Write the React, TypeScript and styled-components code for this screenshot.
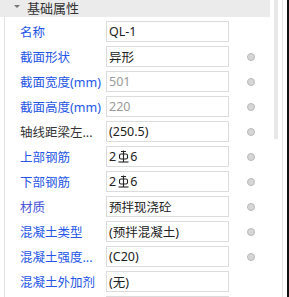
import React from "react";
import styled, { createGlobalStyle } from "styled-components";

const Global = createGlobalStyle`
  html, body { margin: 0; padding: 0; background: #fff; overflow: hidden; }
  * { box-sizing: border-box; }
`;

const Panel = styled.div`
  width: 289px;
  height: 297px;
  display: flex;
  overflow: hidden;
  font-family: "Noto Sans", "Noto Sans CJK SC", sans-serif;
  background: #fff;
`;

const Main = styled.div`
  width: 270px;
  display: flex;
  flex-direction: column;
`;

const Header = styled.div`
  height: 17px;
  background: #ebebeb;
  display: flex;
  align-items: center;
  padding-left: 14px;
  color: #333;
  font-size: 13px;
  line-height: 17px;
`;

const Caret = styled.span`
  width: 0;
  height: 0;
  border-left: 3px solid transparent;
  border-right: 3px solid transparent;
  border-top: 3px solid #777;
  margin-right: 7px;
  margin-top: -4px;
`;

const Body = styled.div`
  flex: 1;
  margin-left: 4px;
  border-left: 1px solid #e2e2e2;
  padding-top: 2px;
  display: flex;
  flex-direction: column;
`;

const Row = styled.div`
  height: 25px;
  display: flex;
  align-items: center;
  flex-shrink: 0;
`;

const Label = styled.div<{ $tone: string }>`
  width: 101px;
  padding-left: 15px;
  font-size: 12.5px;
  color: ${(p) => p.$tone};
  white-space: nowrap;
  overflow: hidden;
`;

const Field = styled.div<{ $muted?: boolean }>`
  width: 123px;
  height: 21px;
  border: 1px solid #dcdcdc;
  padding-left: 2px;
  display: flex;
  align-items: center;
  font-size: 12.5px;
  color: ${(p) => (p.$muted ? "#9a9a9a" : "#222")};
  white-space: nowrap;
  overflow: hidden;
`;

const Dot = styled.span<{ $show: boolean }>`
  width: 8px;
  height: 8px;
  border-radius: 50%;
  margin-left: 18px;
  background: #d6d6d6;
  border: 1px solid #b9b9b9;
  visibility: ${(p) => (p.$show ? "visible" : "hidden")};
`;

const Gutter = styled.div`
  width: 19px;
  display: flex;
`;

const Thumb = styled.div`
  margin-left: 4px;
  width: 4px;
  height: 139px;
  background: #e8e8e8;
`;

const Rule = styled.div`
  margin-left: 4px;
  width: 1px;
  height: 100%;
  background: #e4e4e4;
`;

const Edge = styled.div`
  margin-left: 4px;
  width: 2px;
  height: 100%;
  background: #111;
`;

const Bar = () => (
  <svg width="11" height="13" viewBox="0 0 11 13" style={{ margin: "0 1px 0 2px" }}>
    <line x1="5.5" y1="0.5" x2="5.5" y2="12" stroke="#222" strokeWidth="1.1" />
    <line x1="3" y1="1.5" x2="8" y2="1.5" stroke="#222" strokeWidth="1" />
    <rect x="1.5" y="4" width="8" height="5" rx="1.5" fill="none" stroke="#222" strokeWidth="1.1" />
    <line x1="0.5" y1="12" x2="10.5" y2="12" stroke="#222" strokeWidth="1.1" />
  </svg>
);

const BLUE = "#2456e6";
const DARK = "#333";

type Item = { label: string; tone: string; value: React.ReactNode; muted?: boolean; dot: boolean };

const items: Item[] = [
  { label: "名称", tone: BLUE, value: "QL-1", dot: false },
  { label: "截面形状", tone: BLUE, value: "异形", dot: true },
  { label: "截面宽度(mm)", tone: BLUE, value: "501", muted: true, dot: true },
  { label: "截面高度(mm)", tone: BLUE, value: "220", muted: true, dot: true },
  { label: "轴线距梁左...", tone: DARK, value: "(250.5)", dot: true },
  { label: "上部钢筋", tone: BLUE, value: <>2<Bar />6</>, dot: true },
  { label: "下部钢筋", tone: BLUE, value: <>2<Bar />6</>, dot: true },
  { label: "材质", tone: "#4a55d6", value: "预拌现浇砼", dot: true },
  { label: "混凝土类型", tone: BLUE, value: "(预拌混凝土)", dot: true },
  { label: "混凝土强度...", tone: BLUE, value: "(C20)", dot: true },
  { label: "混凝土外加剂", tone: BLUE, value: "(无)", dot: false },
  { label: "", tone: BLUE, value: "", dot: false },
];

export default function App() {
  return (
    <>
      <Global />
      <Panel>
        <Main>
          <Header>
            <Caret />
            基础属性
          </Header>
          <Body>
            {items.map((it, i) => (
              <Row key={i}>
                <Label $tone={it.tone}>{it.label}</Label>
                <Field $muted={it.muted}>{it.value}</Field>
                <Dot $show={it.dot} />
              </Row>
            ))}
          </Body>
        </Main>
        <Gutter>
          <Thumb />
          <Rule />
          <Edge />
        </Gutter>
      </Panel>
    </>
  );
}
